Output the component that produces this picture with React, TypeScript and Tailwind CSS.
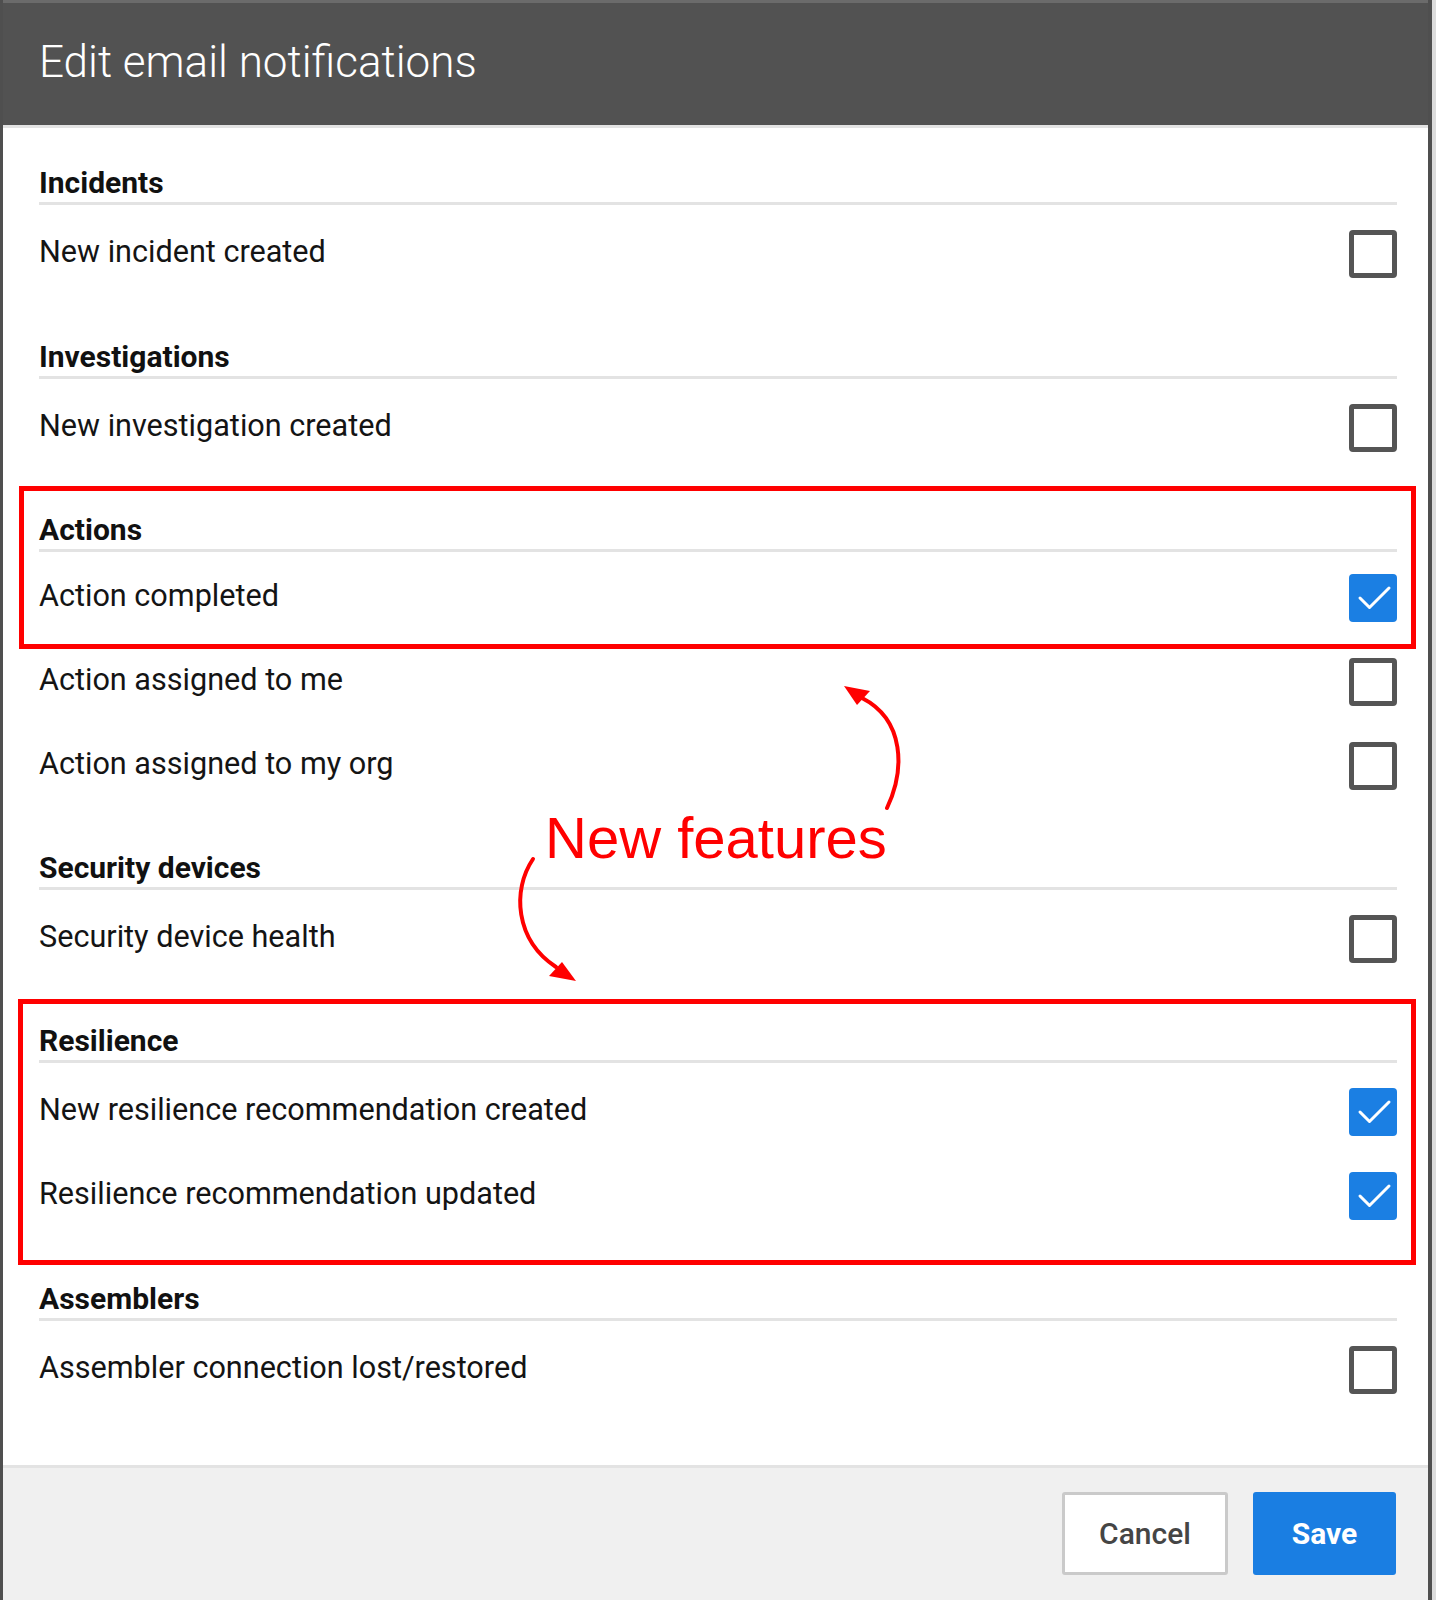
import React from "react";

type Item = { label: string; checked: boolean };
type Section = { title: string; mt: string; rowsMt: string; items: Item[] };

const sections: Section[] = [
  { title: "Incidents", mt: "mt-0", rowsMt: "mt-[7px]", items: [{ label: "New incident created", checked: false }] },
  { title: "Investigations", mt: "mt-[42px]", rowsMt: "mt-[7px]", items: [{ label: "New investigation created", checked: false }] },
  {
    title: "Actions",
    mt: "mt-[41px]",
    rowsMt: "mt-[4px]",
    items: [
      { label: "Action completed", checked: true },
      { label: "Action assigned to me", checked: false },
      { label: "Action assigned to my org", checked: false },
    ],
  },
  { title: "Security devices", mt: "mt-[41px]", rowsMt: "mt-[7px]", items: [{ label: "Security device health", checked: false }] },
  {
    title: "Resilience",
    mt: "mt-[41px]",
    rowsMt: "mt-[7px]",
    items: [
      { label: "New resilience recommendation created", checked: true },
      { label: "Resilience recommendation updated", checked: true },
    ],
  },
  { title: "Assemblers", mt: "mt-[42px]", rowsMt: "mt-[7px]", items: [{ label: "Assembler connection lost/restored", checked: false }] },
];

function Checkbox({ checked }: { checked: boolean }) {
  if (checked) {
    return (
      <div className="w-[48px] h-[48px] rounded-[4px] bg-[#1b7fe3] flex-none">
        <svg width="48" height="48" viewBox="0 0 48 48">
          <path d="M11 24 L20.5 33.5 L40 14" fill="none" stroke="#ffffff" strokeWidth="3" strokeLinecap="round" strokeLinejoin="round" />
        </svg>
      </div>
    );
  }
  return <div className="w-[48px] h-[48px] rounded-[4px] border-[5px] border-[#555555] bg-white flex-none" />;
}

export default function App() {
  return (
    <div className="relative w-[1436px] h-[1600px] bg-[#dcdcdc] font-['Roboto',sans-serif] overflow-hidden">
      <div className="w-[1432px] h-full flex flex-col border-l-[3px] border-r-[4px] border-[#4f4f4f]">
        <div className="h-[3px] bg-[#6b6b6b]" />
        <div className="h-[122px] bg-[#525252] flex items-center pl-[36px] pb-[4px]">
          <h1 className="text-white text-[44px] leading-[44px] font-light">Edit email notifications</h1>
        </div>
        <div className="h-[3px] bg-[#e3e3e3]" />
        <div className="flex-1 bg-white pt-[36px] pl-[36px] pr-[31px]">
          {sections.map((s) => (
            <div key={s.title} className={s.mt}>
              <div className="h-[38px] text-[30px] leading-[38px] font-bold text-[#111111]">{s.title}</div>
              <div className="h-[3px] bg-[#e3e3e3]" />
              <div className={s.rowsMt}>
                {s.items.map((it) => (
                  <div key={it.label} className="h-[84px] flex items-center justify-between">
                    <span className="text-[30.6px] leading-[36px] pb-[4px] text-[#141414]">{it.label}</span>
                    <Checkbox checked={it.checked} />
                  </div>
                ))}
              </div>
            </div>
          ))}
        </div>
        <div className="h-[135px] border-t-[3px] border-[#e3e3e3] bg-[#f0f0f0] flex justify-end items-start pt-[24px] pr-[32px] gap-[25px]">
          <button className="w-[166px] h-[83px] rounded-[3px] border-[3px] border-[#cacaca] bg-white text-[30px] font-medium text-[#454545]">
            Cancel
          </button>
          <button className="w-[143px] h-[83px] rounded-[3px] bg-[#1a7ee2] text-[30px] font-bold text-white">Save</button>
        </div>
      </div>

      {/* annotations */}
      <div className="absolute left-[19px] top-[486px] w-[1397px] h-[163px] border-[5px] border-[#ff0000] pointer-events-none" />
      <div className="absolute left-[18px] top-[999px] w-[1398px] h-[266px] border-[5px] border-[#ff0000] pointer-events-none" />
      <div className="absolute left-[545px] top-[809px] text-[58px] leading-[58px] text-[#ff0000] font-['Liberation_Sans',Arial,sans-serif] whitespace-nowrap">
        New features
      </div>
      <svg className="absolute left-0 top-0 pointer-events-none" width="1436" height="1600" viewBox="0 0 1436 1600">
        <path d="M887 808 C905 770 905 720 862 698" fill="none" stroke="#ff0000" strokeWidth="4" strokeLinecap="round" />
        <polygon points="844,686 870,691 857,705" fill="#ff0000" />
        <path d="M533 859 C512 890 515 940 556 967" fill="none" stroke="#ff0000" strokeWidth="4" strokeLinecap="round" />
        <polygon points="576,981 562,962 549,976" fill="#ff0000" />
      </svg>
    </div>
  );
}
